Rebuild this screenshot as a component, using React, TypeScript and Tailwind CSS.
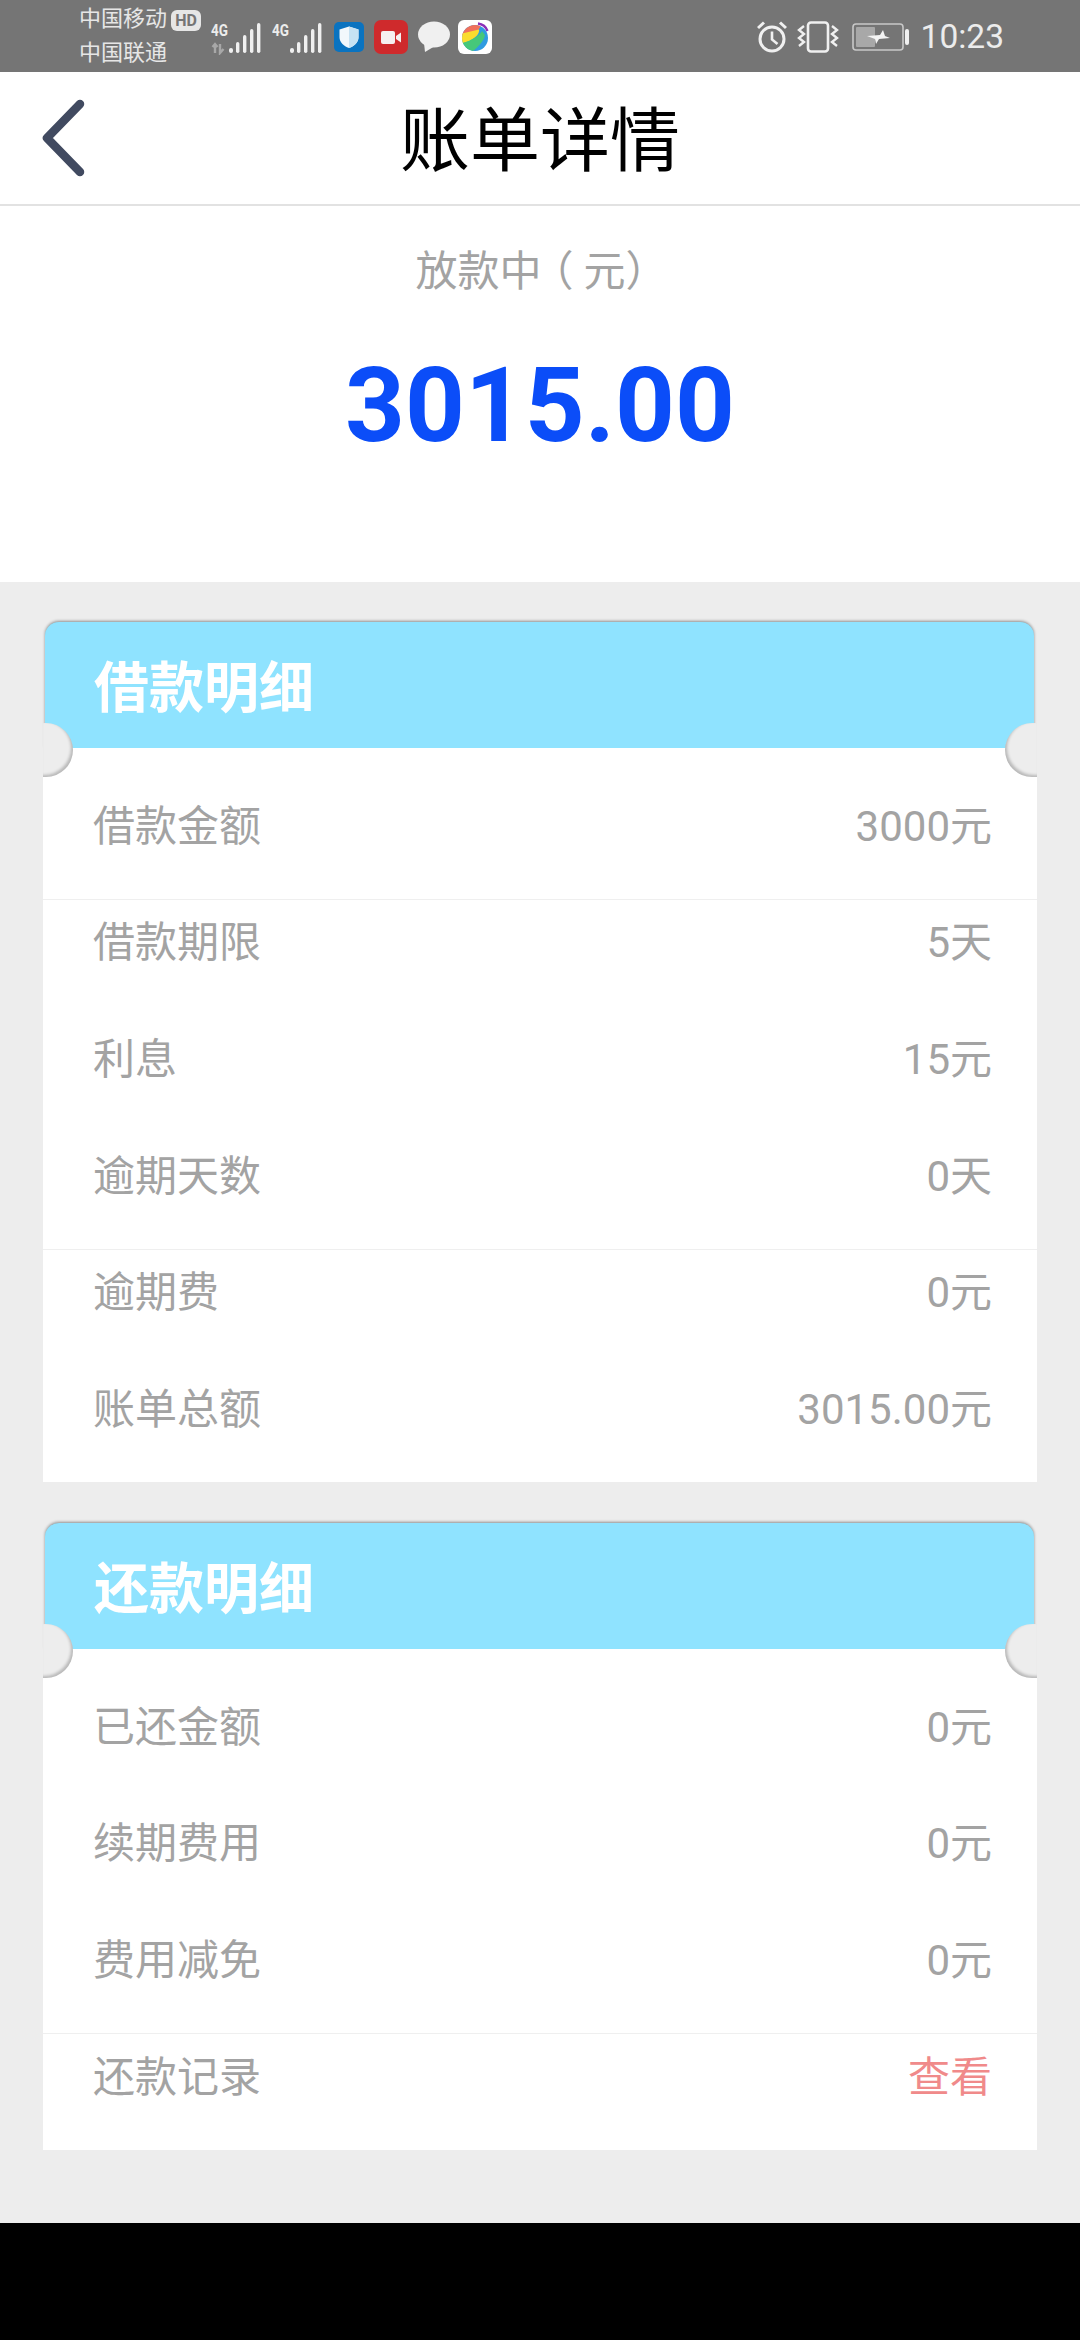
const FONT = "[font-family:Roboto,'Noto_Sans_CJK_SC',sans-serif]";

type Row = { label: string; value: string; divider?: boolean; accent?: boolean };

const LOAN_ROWS: Row[] = [
  { label: "借款金额", value: "3000元" },
  { label: "借款期限", value: "5天", divider: true },
  { label: "利息", value: "15元" },
  { label: "逾期天数", value: "0天" },
  { label: "逾期费", value: "0元", divider: true },
  { label: "账单总额", value: "3015.00元" },
];

const REPAY_ROWS: Row[] = [
  { label: "已还金额", value: "0元" },
  { label: "续期费用", value: "0元" },
  { label: "费用减免", value: "0元" },
  { label: "还款记录", value: "查看", divider: true, accent: true },
];

function Signal({ arrows }: { arrows?: boolean }) {
  return (
    <svg width="50" height="34" viewBox="0 0 50 34" className="shrink-0">
      <text x="0" y="15" fontFamily="Roboto" fontWeight="700" fontSize="16" fill="#ececec" textLength="17" lengthAdjust="spacingAndGlyphs">
        4G
      </text>
      {arrows && (
        <path d="M4 32V23M1.5 26L4 23L6.5 26M9 23V32L12.5 28" stroke="#a8a8a8" strokeWidth="2.4" fill="none" />
      )}
      <rect x="18" y="27" width="4" height="5" rx="2" fill="#f0f0f0" />
      <rect x="25" y="21" width="3.4" height="11" rx="1.7" fill="#f0f0f0" />
      <rect x="32" y="14" width="3.4" height="18" rx="1.7" fill="#f0f0f0" />
      <rect x="39" y="8" width="3.4" height="24" rx="1.7" fill="#f0f0f0" />
      <rect x="46" y="2" width="3.4" height="30" rx="1.7" fill="#f0f0f0" />
    </svg>
  );
}

function ShieldIcon() {
  return (
    <svg width="30" height="30" viewBox="0 0 30 30" className="shrink-0 ml-[12px]">
      <rect width="30" height="30" rx="5" fill="#0a73c0" />
      <path d="M15 4.5L24.5 7.5V15C24.5 20.5 20.5 24 15 26C9.5 24 5.5 20.5 5.5 15V7.5Z" fill="#f2f8fc" />
      <path d="M15 4.5L24.5 7.5V15C24.5 20.5 20.5 24 15 26Z" fill="#c6e2f3" />
    </svg>
  );
}

function VideoIcon() {
  return (
    <svg width="34" height="34" viewBox="0 0 34 34" className="shrink-0 ml-[10px]">
      <rect width="34" height="34" rx="7" fill="#cf2a2c" />
      <rect x="7" y="11" width="14" height="13" rx="2" fill="#f6f0f0" />
      <path d="M22 16L27 12.5V22.5L22 19Z" fill="#f6f0f0" />
    </svg>
  );
}

function BubbleIcon() {
  return (
    <svg width="32" height="32" viewBox="0 0 32 32" className="shrink-0 ml-[10px]">
      <ellipse cx="16" cy="13.5" rx="16" ry="13" fill="#f0f0f0" />
      <path d="M6 22L7 31L17 25Z" fill="#f0f0f0" />
    </svg>
  );
}

function BallIcon() {
  return (
    <svg width="34" height="34" viewBox="0 0 34 34" className="shrink-0 ml-[8px]">
      <defs>
        <clipPath id="ball">
          <circle cx="17" cy="18" r="13" />
        </clipPath>
      </defs>
      <rect width="34" height="34" rx="6" fill="#ffffff" />
      <g clipPath="url(#ball)">
        <rect width="34" height="34" fill="#2f9be0" />
        <path d="M2 4H24L18 14L2 15Z" fill="#f0705c" />
        <path d="M2 14L21 9.5C22 14 16 20 6 23L2 24Z" fill="#fadc2e" />
        <path d="M4 23C14 21 23 14 24 11L27 15C26 22 17 30 12 33L4 30Z" fill="#46c77a" />
      </g>
      <path d="M20 3.5C24 4 28 7 29.5 11" stroke="#8a2fb8" strokeWidth="2.4" fill="none" />
    </svg>
  );
}

function AlarmIcon() {
  return (
    <svg width="30" height="32" viewBox="0 0 30 32" className="shrink-0" fill="none" stroke="#f0f0f0">
      <circle cx="15" cy="18" r="12" strokeWidth="3" />
      <path d="M15 10.5V18.5L20.5 23" strokeWidth="2.6" />
      <path d="M1 7L7 1.5M29 7L23 1.5" strokeWidth="3" />
    </svg>
  );
}

function VibrateIcon() {
  return (
    <svg width="42" height="32" viewBox="0 0 42 32" className="shrink-0 ml-[10px]" fill="none" stroke="#f0f0f0">
      <rect x="11" y="1.5" width="20" height="29" rx="3" strokeWidth="2.6" />
      <path d="M7 5L2 9L7 13L2 17L7 21L2 25" strokeWidth="2.4" />
      <path d="M35 5L40 9L35 13L40 17L35 21L40 25" strokeWidth="2.4" />
    </svg>
  );
}

function BatteryIcon() {
  return (
    <svg width="58" height="28" viewBox="0 0 58 28" className="shrink-0 ml-[13px]">
      <rect x="1" y="1" width="50" height="26" rx="3" fill="none" stroke="#c8c8c8" strokeWidth="1.6" />
      <rect x="4" y="4" width="19" height="20" rx="1" fill="#a8a8a8" />
      <path d="M15 13L28 12L31 7L33 13L38 15L27 16L24 21L23 16Z" fill="#f4f4f4" />
      <rect x="53" y="6" width="4" height="16" rx="2" fill="#f0f0f0" />
    </svg>
  );
}

function StatusBar() {
  return (
    <div className="h-[72px] shrink-0 bg-[#757575] flex items-center pl-[79px] pr-[76px]">
      <div className="flex flex-col text-[22px] leading-[34px] text-[#e6e6e6] w-[89px] shrink-0">
        <span className="whitespace-nowrap">中国移动</span>
        <span className="whitespace-nowrap">中国联通</span>
      </div>
      <span className="self-start mt-[10px] ml-[3px] w-[30px] h-[21px] rounded-[6px] bg-[#e6e6e6] text-[#757575] text-[16px] leading-[21px] font-bold text-center [font-family:Roboto,sans-serif]">
        HD
      </span>
      <div className="flex items-center ml-[10px] gap-[11px] mt-[4px]">
        <Signal arrows />
        <Signal />
      </div>
      <div className="flex items-center mt-[2px]">
        <ShieldIcon />
        <VideoIcon />
        <BubbleIcon />
        <BallIcon />
      </div>
      <div className="flex items-center ml-auto mt-[2px]">
        <AlarmIcon />
        <VibrateIcon />
        <BatteryIcon />
        <span className="ml-[11px] text-[33.5px] leading-none text-[#ececec] [font-family:Roboto,sans-serif]">10:23</span>
      </div>
    </div>
  );
}

function NavBar() {
  return (
    <div className="h-[134px] shrink-0 bg-white border-b-[2px] border-[#e2e2e2] relative flex items-center justify-center pt-[8px]">
      <svg width="46" height="78" viewBox="0 0 46 78" className="absolute left-[41px] top-[27px]" fill="none">
        <path d="M39 5L6 39L39 73" stroke="#414a60" strokeWidth="8.5" strokeLinecap="round" strokeLinejoin="round" />
      </svg>
      <span className="text-[70px] leading-none text-black">账单详情</span>
    </div>
  );
}

function Notch({ side }: { side: "left" | "right" }) {
  return side === "left" ? (
    <div className="absolute left-0 top-[101px] w-[30px] h-[54px] bg-[#ededed] rounded-r-[27px] shadow-[inset_-2px_-2px_3px_rgba(0,0,0,0.22)]" />
  ) : (
    <div className="absolute right-0 top-[101px] w-[32px] h-[54px] bg-[#ededed] rounded-l-[27px] shadow-[inset_2px_-2px_3px_rgba(0,0,0,0.22)]" />
  );
}

function BillCard({ title, rows }: { title: string; rows: Row[] }) {
  return (
    <section className="relative mx-[43px]">
      <div className="ml-[2px] mr-[3px] h-[126px] bg-[#8fe3ff] rounded-t-[14px] shadow-[0_-1px_3px_rgba(0,0,0,0.4)] flex items-center pl-[49px] pt-[7px]">
        <h2 className="text-[55px] leading-none font-bold text-white">{title}</h2>
      </div>
      <Notch side="left" />
      <Notch side="right" />
      <div className="bg-white pt-[20px] pb-[14px]">
        {rows.map((row) => (
          <div key={row.label} className="relative h-[116.67px] flex items-center justify-between pl-[50px] pr-[45px] text-[42px] text-[#a3a3a3]">
            {row.divider && <div className="absolute left-0 right-0 top-[14px] h-px bg-[#efefef]" />}
            <span>{row.label}</span>
            <span className={row.accent ? "text-[#f08a8a]" : ""}>{row.value}</span>
          </div>
        ))}
      </div>
    </section>
  );
}

export default function App() {
  return (
    <div className={`w-[1080px] h-[2340px] overflow-hidden flex flex-col bg-[#ededed] ${FONT}`}>
      <StatusBar />
      <NavBar />
      <div className="h-[376px] shrink-0 bg-white flex flex-col items-center pt-[45px]">
        <div className="text-[42px] leading-[42px] text-[#a3a3a3] ml-[3px]">
          放款<span className="tracking-[-10px]">中</span><span className="tracking-[10px]">（</span>元）
        </div>
        <div className="mt-[61px] text-[104.5px] leading-[104px] font-bold text-[#0b4df8]">3015.00</div>
      </div>
      <div className="flex flex-col gap-[41px] pt-[40px]">
        <BillCard title="借款明细" rows={LOAN_ROWS} />
        <BillCard title="还款明细" rows={REPAY_ROWS} />
      </div>
      <div className="mt-auto h-[117px] shrink-0 bg-black" />
    </div>
  );
}
